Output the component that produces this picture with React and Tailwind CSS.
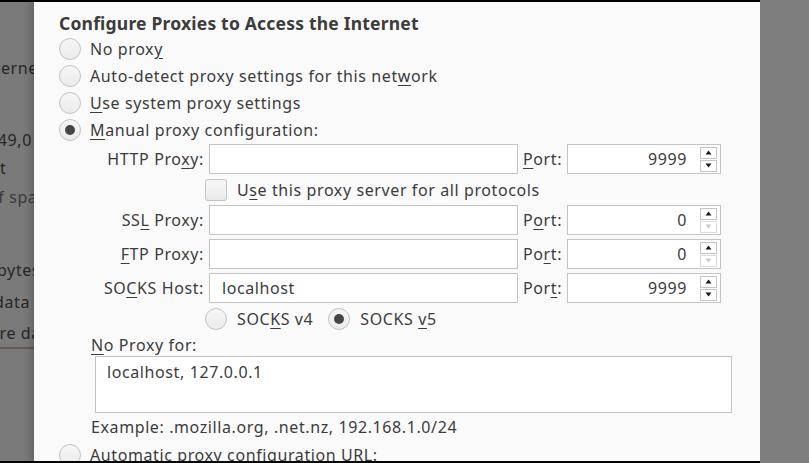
import React from "react";

const FONT = { fontFamily: '"Noto Sans", "Open Sans", sans-serif' };

function U({ children }) {
  return <span className="underline decoration-1 underline-offset-[3px]">{children}</span>;
}

function Radio({ checked }) {
  return (
    <div className="w-[22px] h-[22px] shrink-0 rounded-full border border-[#c3c3c3] bg-gradient-to-b from-[#f6f6f6] to-[#ebebeb] flex items-center justify-center">
      {checked && <div className="w-[10px] h-[10px] rounded-full bg-[#454545]" />}
    </div>
  );
}

function Arrow({ up, dim }) {
  const c = dim ? "#c8c8c8" : "#1a1a1a";
  return (
    <svg width="7" height="5" viewBox="0 0 7 5">
      {up ? <path d="M3.5 0.5 L6.5 4.5 L0.5 4.5 Z" fill={c} /> : <path d="M0.5 0.5 L6.5 0.5 L3.5 4.5 Z" fill={c} />}
    </svg>
  );
}

function PortInput({ value, downDim }) {
  return (
    <div className="w-[154px] h-[30px] border border-[#c4c4c4] bg-white flex items-center">
      <div className="flex-1 text-right pr-[13px]">{value}</div>
      <div className="flex flex-col gap-[1px] mr-[3px]">
        <div className="w-[17px] h-[12px] border border-[#c4c4c4] bg-white flex items-center justify-center">
          <Arrow up />
        </div>
        <div className={"w-[17px] h-[12px] border bg-white flex items-center justify-center " + (downDim ? "border-[#dcdcdc]" : "border-[#c4c4c4]")}>
          <Arrow dim={downDim} />
        </div>
      </div>
    </div>
  );
}

function ProxyRow({ label, value, port, downDim, portLabel, className }) {
  return (
    <div className={"flex items-center h-[30px] shrink-0 " + (className || "")}>
      <div className="w-[146px] text-right pr-[1px] whitespace-nowrap">{label}</div>
      <div className="ml-[4px] w-[309px] h-[30px] border border-[#c4c4c4] bg-white flex items-center pl-[12px]">{value}</div>
      <div className="ml-[5px] w-[44px] whitespace-nowrap">{portLabel}</div>
      <PortInput value={port} downDim={downDim} />
    </div>
  );
}

function RadioRow({ checked, children }) {
  return (
    <div className="flex items-center h-[27px] shrink-0">
      <Radio checked={checked} />
      <div className="ml-[9px] whitespace-nowrap">{children}</div>
    </div>
  );
}

function BgLine({ h, ml, children, className }) {
  return (
    <div className={"flex shrink-0 justify-start items-center whitespace-nowrap " + (className || "")} style={{ height: h }}>
      <span className="shrink-0" style={{ marginLeft: ml }}>{children}</span>
    </div>
  );
}

export default function App() {
  return (
    <div className="w-[809px] h-[463px] bg-[#7e7e7e] flex overflow-hidden text-[16px] tracking-[0.6px] text-[#3c3c3c]" style={FONT}>
      {/* left background strip */}
      <div className="w-[34px] h-full shrink-0 overflow-hidden border-t-2 border-b-2 border-black bg-[#7a7a7a] text-[#262626] flex flex-col">
        <div className="h-[51px] shrink-0" />
        <BgLine h="30px" ml="-22px">Internet</BgLine>
        <div className="h-[42px] shrink-0" />
        <BgLine h="30px" ml="-12px">149,0 MB</BgLine>
        <BgLine h="26px" ml="-20px">ent</BgLine>
        <BgLine h="32px" ml="-12px" className="text-[#3a3a3a]">of space</BgLine>
        <div className="h-[42px] shrink-0" />
        <BgLine h="30px" ml="-3px">bytes</BgLine>
        <BgLine h="34px" ml="-6px">data</BgLine>
        <BgLine h="28px" ml="-10px">are data</BgLine>
        <div className="h-[2px] shrink-0 bg-[#6b5650]" />
      </div>

      {/* dialog */}
      <div className="w-[726px] h-full shrink-0 overflow-hidden bg-[#fafafa] border-t-2 border-b-2 border-black shadow-[0_0_10px_rgba(0,0,0,0.35)] pl-[25px] flex flex-col">
        <div className="h-[33px] shrink-0 pt-[9px] flex items-center font-bold text-[17.5px] tracking-[0.2px] leading-[22px] whitespace-nowrap">
          Configure Proxies to Access the Internet
        </div>
        <RadioRow>No prox<U>y</U></RadioRow>
        <RadioRow>Auto-detect proxy settings for this net<U>w</U>ork</RadioRow>
        <RadioRow><U>U</U>se system proxy settings</RadioRow>
        <RadioRow checked><U>M</U>anual proxy configuration:</RadioRow>

        <ProxyRow className="mt-[1px]" label={<>HTTP Pro<U>x</U>y:</>} value="" port="9999" portLabel={<><U>P</U>ort:</>} />
        <div className="flex items-center h-[31px] shrink-0 pl-[146px]">
          <div className="w-[22px] h-[22px] rounded-[3px] border border-[#c3c3c3] bg-gradient-to-b from-[#f6f6f6] to-[#ebebeb]" />
          <div className="ml-[10px] whitespace-nowrap">U<U>s</U>e this proxy server for all protocols</div>
        </div>
        <ProxyRow label={<>SS<U>L</U> Proxy:</>} value="" port="0" downDim portLabel={<>P<U>o</U>rt:</>} />
        <ProxyRow className="mt-[4px]" label={<><U>F</U>TP Proxy:</>} value="" port="0" downDim portLabel={<>Po<U>r</U>t:</>} />
        <ProxyRow className="mt-[4px]" label={<>SO<U>C</U>KS Host:</>} value="localhost" port="9999" portLabel={<>Por<U>t</U>:</>} />

        <div className="flex items-center h-[31px] shrink-0 pl-[146px]">
          <Radio />
          <div className="ml-[10px] whitespace-nowrap">SOC<U>K</U>S v4</div>
          <div className="ml-[15px]"><Radio checked /></div>
          <div className="ml-[10px] whitespace-nowrap">SOCKS <U>v</U>5</div>
        </div>

        <div className="h-[22px] shrink-0 flex items-center pl-[32px]"><U>N</U>o Proxy for:</div>
        <div className="ml-[36px] w-[637px] h-[57px] shrink-0 border border-[#c4c4c4] bg-white pl-[11px] pt-[3px]">
          localhost, 127.0.0.1
        </div>
        <div className="h-[28px] shrink-0 flex items-center pl-[32px] whitespace-nowrap">Example: .mozilla.org, .net.nz, 192.168.1.0/24</div>
        <RadioRow>Automatic proxy configuration URL:</RadioRow>
      </div>

      {/* right background */}
      <div className="flex-1 h-full bg-[#7e7e7e]" />
    </div>
  );
}
